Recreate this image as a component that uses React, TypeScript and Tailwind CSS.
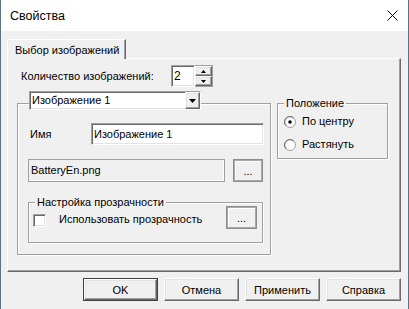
import { ReactNode } from "react";

const ui = "font-['Liberation_Sans',Arial,sans-serif] text-[11px] leading-[13px] text-black whitespace-nowrap";
const seg = "font-['Liberation_Sans',Arial,sans-serif] text-[11px] leading-[16px] text-black whitespace-nowrap";

// classic sunken field: grey/dark top-left, white/light bottom-right
const sunken =
  "border border-t-[#a0a0a0] border-l-[#a0a0a0] border-r-white border-b-white shadow-[inset_1px_1px_0_#696969,inset_-1px_-1px_0_#e3e3e3]";
// classic raised button
const raised =
  "border border-t-white border-l-white border-r-[#696969] border-b-[#696969] shadow-[inset_-1px_-1px_0_#a0a0a0,inset_1px_1px_0_#e3e3e3] bg-[#f0f0f0]";
const etched = "border border-[#a0a0a0] shadow-[inset_1px_1px_0_#fff,1px_1px_0_#fff]";

const Btn = ({ children, def }: { children: ReactNode; def?: boolean }) => (
  <div
    className={
      def
        ? "w-[75px] h-[23px] border border-[#404040] flex"
        : "w-[75px] h-[23px] flex"
    }
  >
    <div className={`${raised} flex-1 flex items-center justify-center ${seg} text-[11.5px]`}>{children}</div>
  </div>
);

const Dots = () => (
  <div className="w-full h-full border border-[#8c8c8c] shadow-[inset_0_0_0_1px_#a8a8a8] flex">
    <div className="flex-1 m-[1px] bg-[#f0f0f0] shadow-[inset_1px_1px_0_#fff] flex items-center justify-center text-[11px] font-['Liberation_Sans',sans-serif] leading-none pt-[2px]">
      ...
    </div>
  </div>
);

const Radio = ({ on }: { on?: boolean }) => (
  <svg width="12" height="12" viewBox="0 0 12 12" className="shrink-0">
    <circle cx="6" cy="6" r="5.5" fill="#fff" stroke="#a0a0a0" />
    <path d="M2.2 9.8 A5 5 0 0 1 9.8 2.2" fill="none" stroke="#696969" />
    {on && <circle cx="6" cy="6" r="1.8" fill="#000" />}
  </svg>
);

export default function App() {
  return (
    <div className="w-[409px] h-[309px] bg-[#f0f0f0] border-x border-[#5b7380] flex flex-col overflow-hidden">
      {/* title bar */}
      <div className="h-[31px] bg-white flex items-center justify-between pl-[9px] pr-[10px] shrink-0">
        <span className="font-['Liberation_Sans',sans-serif] text-[12.5px] leading-[16px] text-black">Свойства</span>
        <svg width="11" height="11" viewBox="0 0 11 11">
          <path d="M0.5 0.5 L10.5 10.5 M10.5 0.5 L0.5 10.5" stroke="#000" strokeWidth="1" />
        </svg>
      </div>

      <div className="flex flex-col pl-[6px] pr-[7px] pt-[8px]">
        {/* tab */}
        <div className="relative z-10 -mb-px w-[119px] h-[20px] bg-[#f0f0f0] border-l border-t border-white border-r border-r-[#696969] shadow-[inset_-1px_0_0_#a0a0a0] flex items-center pl-[7px]">
          <span className={`${seg} text-[11.5px]`}>Выбор изображений</span>
        </div>

        {/* tab panel */}
        <div className="w-[394px] h-[214px] border-l border-t border-white border-r border-b border-r-[#696969] border-b-[#696969] shadow-[inset_-1px_-1px_0_#a0a0a0] flex flex-col">
          {/* count row */}
          <div className="flex items-center mt-[6px] pl-[13px]">
            <span className={`${ui} w-[150px]`}>Количество изображений:</span>
            <div className="flex h-[22px]">
              <div className={`${sunken} bg-white w-[24px] flex items-center pl-[2px] ${ui} text-[12px]`}>2</div>
              <div className="flex flex-col w-[18px] border border-l-0 border-[#a0a0a0] shadow-[inset_0_-1px_0_#fff]">
                <div className={`${raised} flex-1 flex items-center justify-center`}>
                  <svg width="5" height="3" viewBox="0 0 5 3"><path d="M2.5 0 L5 3 L0 3Z" fill="#000" /></svg>
                </div>
                <div className={`${raised} flex-1 flex items-center justify-center`}>
                  <svg width="5" height="3" viewBox="0 0 5 3"><path d="M0 0 L5 0 L2.5 3Z" fill="#000" /></svg>
                </div>
              </div>
            </div>
          </div>

          {/* groups row */}
          <div className="flex items-start mt-[16px] pl-[9px]">
            {/* left group */}
            <div className={`${etched} w-[254px] h-[152px] flex flex-col`}>
              <div className={`${sunken} bg-white -mt-[13px] ml-[11px] w-[172px] h-[19px] flex items-center`}>
                <span className={`${ui} flex-1 pl-[2px]`}>Изображение 1</span>
                <div className={`${raised} w-[15px] h-full flex items-center justify-center`}>
                  <svg width="7" height="4" viewBox="0 0 7 4"><path d="M0 0 L7 0 L3.5 4Z" fill="#000" /></svg>
                </div>
              </div>

              <div className="flex items-center mt-[13px] pl-[12px]">
                <span className={`${ui} w-[61px]`}>Имя</span>
                <div className={`${sunken} bg-white w-[173px] h-[22px] flex items-center pl-[2px] ${ui}`}>
                  Изображение 1
                </div>
              </div>

              <div className="flex items-center mt-[14px] pl-[10px] gap-[8px]">
                <div className="w-[197px] h-[23px] border border-[#a0a0a0] shadow-[inset_-1px_-1px_0_#fff] flex items-center pl-[2px]">
                  <span className={ui}>BatteryEn.png</span>
                </div>
                <div className="w-[30px] h-[23px]">
                  <Dots />
                </div>
              </div>

              <div className={`${etched} ml-[10px] mt-[20px] w-[235px] h-[41px] flex flex-col`}>
                <span className={`${ui} -mt-[7px] ml-[6px] px-[2px] bg-[#f0f0f0] self-start`}>
                  Настройка прозрачности
                </span>
                <div className="flex items-center pl-[4px]">
                  <div className={`${sunken} bg-white w-[13px] h-[13px] mt-[2px]`} />
                  <span className={`${ui} ml-[13px] flex-1`}>Использовать прозрачность</span>
                  <div className="w-[31px] h-[23px] mr-[5px] -mt-[3px]">
                    <Dots />
                  </div>
                </div>
              </div>
            </div>

            {/* right group */}
            <div className={`${etched} ml-[6px] w-[111px] h-[56px] flex flex-col`}>
              <span className={`${ui} -mt-[7px] ml-[6px] px-[2px] bg-[#f0f0f0] self-start`}>Положение</span>
              <div className="flex items-center gap-[6px] pl-[6px] mt-[5px]">
                <Radio on />
                <span className={ui}>По центру</span>
              </div>
              <div className="flex items-center gap-[6px] pl-[6px] mt-[10px]">
                <Radio />
                <span className={ui}>Растянуть</span>
              </div>
            </div>
          </div>
        </div>

        {/* dialog buttons */}
        <div className="flex justify-end gap-[6px] mt-[6px]">
          <Btn def>OK</Btn>
          <Btn>Отмена</Btn>
          <Btn>Применить</Btn>
          <Btn>Справка</Btn>
        </div>
      </div>
    </div>
  );
}
